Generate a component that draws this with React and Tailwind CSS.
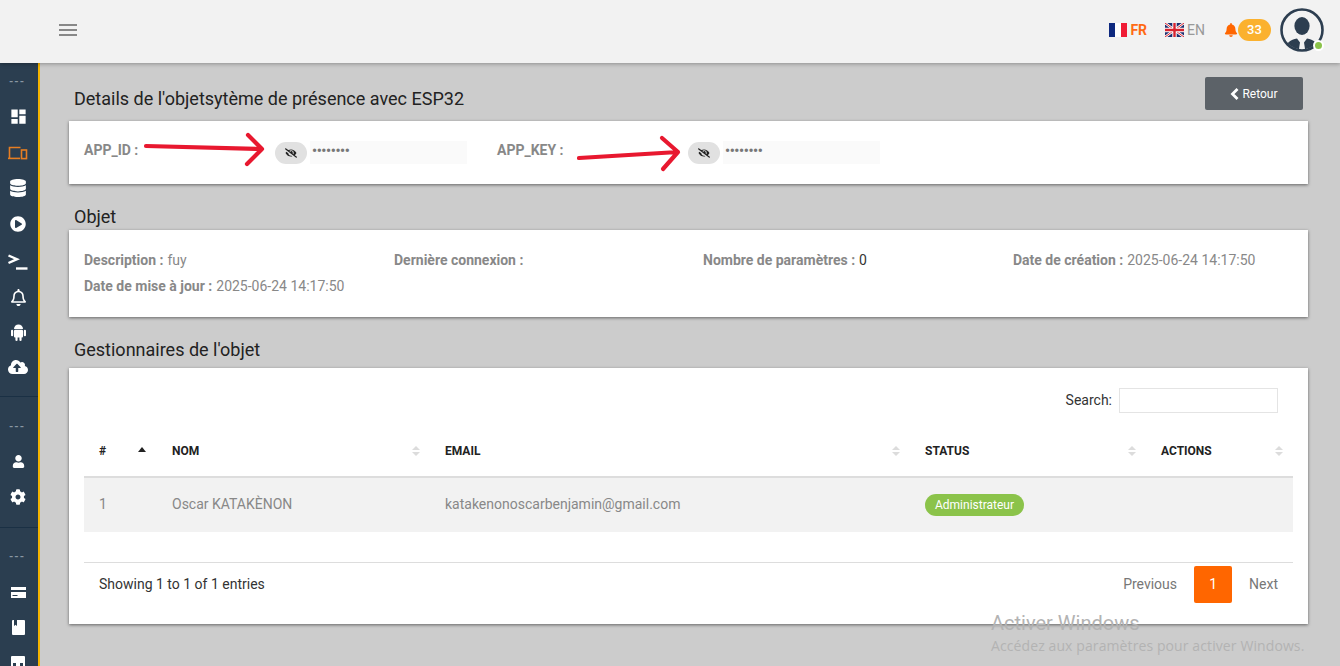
import React from 'react';
import { MdDashboard, MdMenu } from 'react-icons/md';
import {
  FaDatabase,
  FaPlayCircle,
  FaRegBell,
  FaBell,
  FaCloudUploadAlt,
  FaUser,
  FaCog,
  FaEyeSlash,
} from 'react-icons/fa';

const DevicesIcon = () => (
  <svg width="20" height="14" viewBox="0 0 20 14" fill="none" stroke="#e67e22" strokeWidth="1.6">
    <path d="M1.5 12V1.5h11" />
    <path d="M0 12.4h12" />
    <rect x="13.5" y="4" width="5" height="8.6" />
  </svg>
);

const TerminalIcon = () => (
  <svg width="20" height="16" viewBox="0 0 20 16" fill="none" stroke="#fff" strokeWidth="2.4">
    <path d="M0.5 1.5 9 5.2 0.5 9" />
    <path d="M8 14.5h11.5" />
  </svg>
);

const AndroidIcon = () => (
  <svg width="15" height="18" viewBox="0 0 15 18" fill="#fff">
    <path d="M3 6a4.500 4.500 0 0 1 9 0z" />
    <rect x="3" y="6.800" width="9" height="7.700" rx="1" />
    <rect x="0" y="6.800" width="2.200" height="6.500" rx="1.100" />
    <rect x="12.800" y="6.800" width="2.200" height="6.500" rx="1.100" />
    <rect x="4.400" y="13" width="2.200" height="5" rx="1.100" />
    <rect x="8.400" y="13" width="2.200" height="5" rx="1.100" />
  </svg>
);

const CardIcon = () => (
  <svg width="15" height="11" viewBox="0 0 15 11" fill="#fff">
    <rect width="15" height="3" />
    <path d="M0 5h15v6H0z" />
    <path d="M1.500 8h5v1h-5z" fill="#2b3e50" />
  </svg>
);

const BookIcon = () => (
  <svg width="13" height="15" viewBox="0 0 13 15" fill="#fff">
    <rect width="13" height="15" rx="1" />
    <path d="M2 0h3v6L3.500 4.800 2 6z" fill="#2b3e50" />
  </svg>
);

const StoreIcon = () => (
  <svg width="14" height="11" viewBox="0 0 14 11" fill="#fff">
    <rect width="14" height="11" rx="1" />
    <path d="M2 7h3v4H2zM9 7h3v4H9z" fill="#2b3e50" />
  </svg>
);

const Dots = () => <div className="h-[36px] pt-[3px] flex items-center justify-center text-[#8a97a3] text-[11px] font-bold tracking-[1px] pr-1">---</div>;

const SideItem = ({ children, className = '' }) => <div className={`h-[35.8px] flex items-center justify-center pr-[2px] text-white ${className}`}>{children}</div>;

const FrenchFlag = () => (
  <svg width="18" height="14" viewBox="0 0 18 14">
    <rect width="6" height="14" fill="#0f2a80" />
    <rect x="6" width="6" height="14" fill="#fff" />
    <rect x="12" width="6" height="14" fill="#f01c36" />
  </svg>
);

const UkFlag = () => (
  <svg width="19" height="14" viewBox="0 0 19 14">
    <rect width="19" height="14" fill="#1f2f70" />
    <path d="M0 0 19 14M19 0 0 14" stroke="#fff" strokeWidth="2.6" />
    <path d="M0 0 19 14M19 0 0 14" stroke="#d8232f" strokeWidth="1" />
    <path d="M9.5 0v14M0 7h19" stroke="#fff" strokeWidth="4.4" />
    <path d="M9.5 0v14M0 7h19" stroke="#d8232f" strokeWidth="2.4" />
  </svg>
);

const Avatar = () => (
  <svg width="44" height="44" viewBox="0 0 44 44">
    <defs>
      <clipPath id="avatarClip">
        <circle cx="22" cy="22" r="19.5" />
      </clipPath>
    </defs>
    <circle cx="22" cy="22" r="20.5" fill="#f2f2f2" stroke="#2d3e50" strokeWidth="2.6" />
    <g clipPath="url(#avatarClip)" fill="#2d3e50">
      <ellipse cx="22" cy="18" rx="7.6" ry="9" />
      <path d="M5 44c0-9 5-12 12-13.500l3 4-1.500 9.500zM39 44c0-9-5-12-12-13.500l-3 4 1.500 9.500z" />
    </g>
  </svg>
);

const SortArrows = () => (
  <span className="flex flex-col gap-[2px]">
    <span className="w-0 h-0 border-x-[4.500px] border-x-transparent border-b-[4.500px] border-b-[#dcdcdc]" />
    <span className="w-0 h-0 border-x-[4.500px] border-x-transparent border-t-[4.500px] border-t-[#dcdcdc]" />
  </span>
);

const Th = ({ label }) => (
  <div className="flex items-center justify-between pb-[5px] pl-[15px] pr-[10px] text-[12px] font-bold text-[#222]">
    <span>{label}</span>
    <SortArrows />
  </div>
);

const SecretField = ({ label }) => (
  <div className="flex items-center w-[413px]">
    <span className="w-[191px] text-[14px] font-bold text-[#888] -mt-[5px]">{label}</span>
    <span className="w-[32px] h-[22px] rounded-full bg-[#e1e1e1] flex items-center justify-center text-[#222] text-[12px]">
      <FaEyeSlash />
    </span>
    <span className="ml-[3px] w-[157px] h-[23px] bg-[#fafafa] pl-[2px] text-[#777] text-[14px] leading-[20px] font-bold tracking-[-0.35px]">••••••••</span>
  </div>
);

const Info = ({ label, value, dark }) => (
  <div className="h-[26px] flex items-center text-[14px] text-[#888] whitespace-nowrap">
    <span className="font-bold">{label}</span>
    {value && <span className={`ml-1 ${dark ? 'text-[#333]' : ''}`}>{value}</span>}
  </div>
);

const Arrow = ({ className, d }) => (
  <svg className={`absolute pointer-events-none ${className}`} width="130" height="50" viewBox="0 0 130 50" fill="none" stroke="#e8182f" strokeWidth="4.2" strokeLinecap="round" strokeLinejoin="round">
    <path d={d} />
  </svg>
);

export default function App() {
  return (
    <div className="relative w-[1340px] h-[666px] overflow-hidden bg-[#cccccc] font-['Roboto',sans-serif] flex flex-col">
      {/* Top bar */}
      <header className="relative z-10 h-[63px] shrink-0 bg-[#f2f2f2] shadow-[0_1px_4px_rgba(0,0,0,0.3)] flex items-center pb-[3px] pl-[56px] pr-[16px]">
        <MdMenu className="text-[#888] text-[24px]" />
        <div className="ml-auto flex items-center">
          <FrenchFlag />
          <span className="ml-[3px] text-[14px] font-bold text-[#ff6a13]">FR</span>
          <span className="ml-[18px]"><UkFlag /></span>
          <span className="ml-[3px] text-[14px] text-[#999]">EN</span>
          <FaBell className="ml-[19px] text-[#ff6600] text-[14px]" />
          <span className="w-[33px] h-[22px] rounded-full bg-[#fbb12e] text-white text-[13px] font-medium flex items-center justify-center">33</span>
          <span className="relative ml-[9px]">
            <Avatar />
            <span className="absolute right-0 bottom-[1px] w-[11px] h-[11px] rounded-full bg-[#8bc34a] border-2 border-white" />
          </span>
        </div>
      </header>

      <div className="flex flex-1 min-h-0">
        {/* Sidebar */}
        <aside className="w-[40px] shrink-0 bg-[#2b3e50] border-r-2 border-[#f5b400]">
          <Dots />
          <SideItem><MdDashboard className="text-[19px]" /></SideItem>
          <SideItem><DevicesIcon /></SideItem>
          <SideItem><FaDatabase className="text-[18px]" /></SideItem>
          <SideItem><FaPlayCircle className="text-[16px]" /></SideItem>
          <SideItem className="pt-[3px]"><TerminalIcon /></SideItem>
          <SideItem className="pt-[3px]"><FaRegBell className="text-[17px]" /></SideItem>
          <SideItem><AndroidIcon /></SideItem>
          <SideItem><FaCloudUploadAlt className="text-[20px]" /></SideItem>
          <div className="mt-[11px] border-t border-[#1a3044] pt-[10px]">
            <Dots />
            <SideItem><FaUser className="text-[13px]" /></SideItem>
            <SideItem><FaCog className="text-[16px]" /></SideItem>
          </div>
          <div className="mt-[12px] border-t border-[#1a3044] pt-[10px]">
            <Dots />
            <SideItem className="pt-[2px]"><CardIcon /></SideItem>
            <SideItem><BookIcon /></SideItem>
            <SideItem className="pb-[4px]"><StoreIcon /></SideItem>
          </div>
        </aside>

        {/* Content */}
        <main className="flex-1 min-w-0 pl-[29px] pr-[32px] pt-[14px]">
          <div className="flex items-end justify-between h-[44px] pr-[5px]">
            <h1 className="pl-[5px] pb-[10px] text-[18px] leading-[24px] text-[#222]">Details de l'objetsytème de présence avec ESP32</h1>
            <button className="self-start w-[98px] h-[33px] rounded-[2px] bg-[#5c6268] text-white text-[12px] flex items-center justify-center gap-[3px]">
              <svg width="9" height="12" viewBox="0 0 9 12" fill="none" stroke="#fff" strokeWidth="2.8">
                <path d="M7.500 1 2.500 6l5 5" />
              </svg>
              Retour
            </button>
          </div>

          <section className="h-[63px] bg-white shadow-[0_1px_3px_rgba(0,0,0,0.5)] px-[15px] flex items-center">
            <SecretField label="APP_ID :" />
            <SecretField label="APP_KEY :" />
          </section>

          <h2 className="pl-[5px] pt-[21px] pb-[2px] text-[18px] leading-[23px] text-[#222]">Objet</h2>
          <section className="h-[87px] bg-white shadow-[0_1px_3px_rgba(0,0,0,0.5)] px-[15px] pt-[17px]">
            <div className="grid grid-cols-[310px_309px_310px_280px]">
              <Info label="Description :" value="fuy" />
              <Info label="Dernière connexion :" />
              <Info label="Nombre de paramètres :" value="0" dark />
              <Info label="Date de création :" value="2025-06-24 14:17:50" />
              <Info label="Date de mise à jour :" value="2025-06-24 14:17:50" />
            </div>
          </section>

          <h2 className="pl-[5px] pt-[21px] pb-[7px] text-[18px] leading-[23px] text-[#222]">Gestionnaires de l'objet</h2>
          <section className="h-[256px] bg-white shadow-[0_1px_3px_rgba(0,0,0,0.5)] px-[15px] pt-[20px]">
            <div className="flex items-center justify-end pr-[15px] text-[14px] text-[#333]">
              <span>Search:</span>
              <input className="ml-[7px] w-[159px] h-[25px] border border-[#e4e4e4] bg-white" />
            </div>

            <div className="mt-[18px] grid grid-cols-[73px_273px_480px_236px_147px] h-[47px] border-b-2 border-[#dddddd]">
              <div className="relative flex items-center pb-[5px] pl-[15px] text-[12px] font-bold text-[#222]">
                #
                <span className="absolute left-[54px] top-[16px] w-0 h-0 border-x-[4.500px] border-x-transparent border-b-[5px] border-b-[#222]" />
              </div>
              <Th label="NOM" />
              <Th label="EMAIL" />
              <Th label="STATUS" />
              <Th label="ACTIONS" />
            </div>
            <div className="grid grid-cols-[73px_273px_480px_236px_147px] h-[54px] pb-[1px] items-center bg-[#f2f2f2] text-[14px] text-[#888]">
              <div className="pl-[15px]">1</div>
              <div className="pl-[15px]">Oscar KATAKÈNON</div>
              <div className="pl-[15px]">katakenonoscarbenjamin@gmail.com</div>
              <div className="pl-[15px]">
                <span className="inline-flex items-center h-[22px] px-[10px] rounded-full bg-[#8bc34a] text-white text-[12px]">Administrateur</span>
              </div>
              <div />
            </div>

            <div className="mt-[30px] border-t border-[#dddddd] pt-[3px] flex items-center justify-between pl-[15px] pr-[15px] text-[14px]">
              <span className="text-[#333] -mt-[1px]">Showing 1 to 1 of 1 entries</span>
              <div className="flex items-center text-[#777]">
                <span>Previous</span>
                <span className="ml-[17px] w-[38px] h-[37px] rounded-[2px] bg-[#ff6600] text-white flex items-center justify-center">1</span>
                <span className="ml-[17px]">Next</span>
              </div>
            </div>
          </section>
        </main>
      </div>

      {/* Annotation arrows drawn over the page */}
      <Arrow className="left-[140px] top-[127px]" d="M6 19 L122 22 M108 8 L122 22 L107 37" />
      <Arrow className="left-[560px] top-[127px]" d="M19 31 L118 25 M102 11 L118 25 L103 42" />

      {/* Windows watermark */}
      <div className="absolute left-[991px] top-[611px] text-[#b3b3b3] pointer-events-none">
        <div className="text-[20px] leading-[24px]">Activer Windows</div>
        <div className="text-[14px] leading-[20px] mt-[1px] font-['Open_Sans',sans-serif] tracking-[0.1px]">Accédez aux paramètres pour activer Windows.</div>
      </div>
    </div>
  );
}
